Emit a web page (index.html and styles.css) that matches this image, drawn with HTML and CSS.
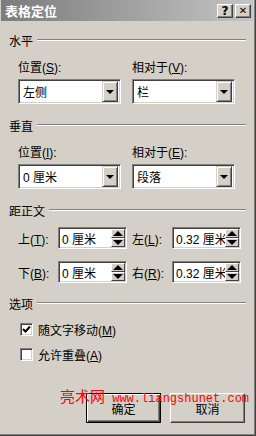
FILE: index.html
```html
<!DOCTYPE html>
<html lang="zh-CN">
  <head>
    <meta charset="UTF-8" />
    <title>表格定位</title>
    <link rel="stylesheet" href="styles.css">
  </head>
  <body>
    <div class="dialog">
      <div class="titlebar">
        <span class="title">表格定位</span>
        <div class="title-buttons">
          <span class="tbtn">?</span>
          <span class="tbtn tbtn-close">✕</span>
        </div>
      </div>

      <div class="content">
        <div class="group-head"><span>水平</span><i class="etch"></i></div>
        <div class="pair labels-row">
          <label>位置(<u>S</u>):</label>
          <label>相对于(<u>V</u>):</label>
        </div>
        <div class="pair combos-row">
          <div class="combo"><span class="combo-text">左侧</span><span class="drop"><b class="arrow-down"></b></span></div>
          <div class="combo"><span class="combo-text">栏</span><span class="drop"><b class="arrow-down"></b></span></div>
        </div>

        <div class="group-head head-vert"><span>垂直</span><i class="etch"></i></div>
        <div class="pair labels-row">
          <label>位置(<u>I</u>):</label>
          <label>相对于(<u>E</u>):</label>
        </div>
        <div class="pair combos-row">
          <div class="combo"><span class="combo-text">0 厘米</span><span class="drop"><b class="arrow-down"></b></span></div>
          <div class="combo"><span class="combo-text">段落</span><span class="drop"><b class="arrow-down"></b></span></div>
        </div>

        <div class="group-head head-dist"><span>距正文</span><i class="etch"></i></div>
        <div class="pair spin-row">
          <div class="spin-field">
            <label>上(<u>T</u>):</label>
            <div class="spin"><span class="spin-text">0 厘米</span><span class="spin-btns"><span class="sbtn"><b class="tri-up"></b></span><span class="sbtn"><b class="tri-down"></b></span></span></div>
          </div>
          <div class="spin-field">
            <label>左(<u>L</u>):</label>
            <div class="spin"><span class="spin-text">0.32 厘米</span><span class="spin-btns"><span class="sbtn"><b class="tri-up"></b></span><span class="sbtn"><b class="tri-down"></b></span></span></div>
          </div>
        </div>
        <div class="pair spin-row spin-row-2">
          <div class="spin-field">
            <label>下(<u>B</u>):</label>
            <div class="spin"><span class="spin-text">0 厘米</span><span class="spin-btns"><span class="sbtn"><b class="tri-up"></b></span><span class="sbtn"><b class="tri-down"></b></span></span></div>
          </div>
          <div class="spin-field">
            <label>右(<u>R</u>):</label>
            <div class="spin"><span class="spin-text">0.32 厘米</span><span class="spin-btns"><span class="sbtn"><b class="tri-up"></b></span><span class="sbtn"><b class="tri-down"></b></span></span></div>
          </div>
        </div>

        <div class="group-head head-opt"><span>选项</span><i class="etch"></i></div>
        <div class="check-row">
          <span class="checkbox">
            <svg width="9" height="9" viewBox="0 0 9 9"><path d="M1 4 L3.5 6.5 L8 1.5" fill="none" stroke="#000" stroke-width="2"/></svg>
          </span>
          <span>随文字移动(<u>M</u>)</span>
        </div>
        <div class="check-row check-row-2">
          <span class="checkbox"></span>
          <span>允许重叠(<u>A</u>)</span>
        </div>

        <div class="actions">
          <span class="btn btn-default">确定</span>
          <span class="btn">取消</span>
          <div class="watermark"><span class="wm-cn">亮术网</span> www.liangshunet.com</div>
        </div>
      </div>
    </div>
  </body>
</html>
```

FILE: styles.css
```css
body {
  margin: 0;
  font-family: "Liberation Sans", "Noto Sans CJK SC", sans-serif;
  font-size: 12px;
  color: #000;
  background: #d4d0c8;
}
.dialog {
  width: 256px;
  height: 436px;
  box-sizing: border-box;
  background: #d4d0c8;
  border-right: 1px solid #404040;
  border-bottom: 1px solid #404040;
  box-shadow: inset -1px -1px #808080;
  padding: 0 2px 2px 2px;
  display: flex;
  flex-direction: column;
}
.titlebar {
  height: 21px;
  margin: 0 0 0 -1px;
  background: linear-gradient(to right, #7c7c7c, #c4c4c4);
  display: flex;
  align-items: center;
  justify-content: space-between;
  padding: 0 2px 0 4px;
}
.title {
  color: #fff;
  font-weight: bold;
  font-size: 13px;
  font-family: "Noto Sans CJK SC", sans-serif;
  line-height: 15px;
}
.title-buttons {
  display: flex;
  gap: 2px;
}
.tbtn {
  width: 14px;
  height: 12px;
  background: #d4d0c8;
  border: 1px solid;
  border-color: #fff #404040 #404040 #fff;
  box-shadow: inset -1px -1px #808080;
  display: flex;
  align-items: center;
  justify-content: center;
  font-weight: bold;
  font-size: 12px;
  font-family: "DejaVu Sans", sans-serif;
  line-height: 1;
}
.tbtn-close {
  font-size: 10px;
}
.content {
  position: relative;
  padding: 0 7px 0 7px;
  flex: 1;
}
.group-head {
  display: flex;
  align-items: center;
  height: 14px;
  margin-top: 12px;
  gap: 4px;
}
.etch {
  flex: 1;
  height: 1px;
  background: #808080;
  border-bottom: 1px solid #fff;
}
.pair {
  display: flex;
  padding-left: 9px;
}
.pair > * {
  width: 119px;
}
.labels-row {
  margin-top: 12px;
  height: 14px;
  align-items: center;
}
.combos-row {
  margin-top: 6px;
}
.combo {
  box-sizing: border-box;
  width: 108px !important;
  height: 25px;
  margin-right: 11px;
  background: #fff;
  border: 1px solid;
  border-color: #808080 #fff #fff #808080;
  box-shadow: inset 1px 1px #404040, inset -1px -1px #d4d0c8;
  display: flex;
  align-items: center;
  padding: 2px;
}
.combo-text {
  flex: 1;
  padding-left: 2px;
}
.drop {
  box-sizing: border-box;
  width: 16px;
  height: 21px;
  background: #d4d0c8;
  border: 1px solid;
  border-color: #d4d0c8 #404040 #404040 #d4d0c8;
  box-shadow: inset 1px 1px #fff, inset -1px -1px #808080;
  display: flex;
  align-items: center;
  justify-content: center;
}
.arrow-down {
  width: 0;
  height: 0;
  border-left: 4px solid transparent;
  border-right: 4px solid transparent;
  border-top: 4px solid #000;
  margin-top: 1px;
}
.head-vert {
  margin-top: 14px;
}
.head-dist {
  margin-top: 14px;
}
.spin-row {
  margin-top: 10px;
}
.spin-row-2 {
  margin-top: 12px;
}
.spin-field {
  display: flex;
  align-items: center;
}
.spin-field label {
  width: 40px;
}
.spin {
  box-sizing: border-box;
  width: 69px;
  height: 22px;
  background: #fff;
  border: 1px solid;
  border-color: #808080 #fff #fff #808080;
  box-shadow: inset 1px 1px #404040, inset -1px -1px #d4d0c8;
  display: flex;
  align-items: center;
  padding: 2px 1px 2px 2px;
}
.spin-text {
  flex: 1;
  min-width: 0;
  white-space: nowrap;
  overflow: hidden;
  padding-left: 1px;
}
.spin-btns {
  display: flex;
  flex-direction: column;
  width: 14px;
  height: 18px;
}
.sbtn {
  flex: 1;
  background: #d4d0c8;
  border: 1px solid;
  border-color: #fff #404040 #404040 #fff;
  display: flex;
  align-items: center;
  justify-content: center;
}
.tri-up {
  width: 0;
  height: 0;
  border-left: 5px solid transparent;
  border-right: 5px solid transparent;
  border-bottom: 5px solid #000;
}
.tri-down {
  width: 0;
  height: 0;
  border-left: 5px solid transparent;
  border-right: 5px solid transparent;
  border-top: 5px solid #000;
}
.head-opt {
  margin-top: 13px;
}
.check-row {
  display: flex;
  align-items: center;
  gap: 5px;
  padding-left: 11px;
  margin-top: 12px;
  height: 14px;
}
.check-row-2 {
  margin-top: 11px;
}
.checkbox {
  box-sizing: border-box;
  width: 13px;
  height: 13px;
  background: #fff;
  border: 1px solid;
  border-color: #808080 #fff #fff #808080;
  box-shadow: inset 1px 1px #404040, inset -1px -1px #d4d0c8;
  display: flex;
  align-items: center;
  justify-content: center;
}
.actions {
  position: relative;
  display: flex;
  justify-content: flex-end;
  gap: 9px;
  margin-top: 32px;
  padding-right: 1px;
}
.btn {
  box-sizing: border-box;
  width: 75px;
  height: 30px;
  background: #d4d0c8;
  border: 1px solid;
  border-color: #fff #404040 #404040 #fff;
  box-shadow: inset -1px -1px #808080;
  display: flex;
  align-items: center;
  justify-content: center;
  padding-top: 1px;
}
.btn-default {
  border: 1px solid #000;
  box-shadow: inset 1px 1px #fff, inset -1px -1px #404040, inset -2px -2px #808080;
}
.watermark {
  position: absolute;
  left: 51px;
  top: -5px;
  color: #f00;
  font-family: "Liberation Mono", "Noto Sans CJK SC", monospace;
  font-size: 12px;
  line-height: 15px;
  white-space: nowrap;
}
.wm-cn {
  font-family: "Noto Sans CJK SC", sans-serif;
  font-size: 15px;
}
```
